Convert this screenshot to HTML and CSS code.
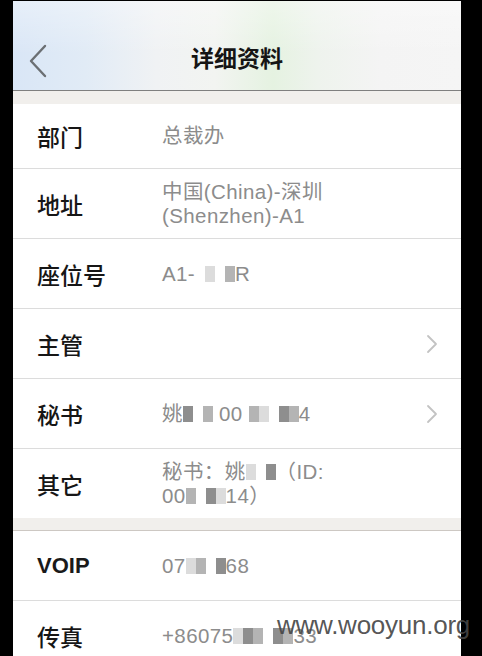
FILE: index.html
```html
<!DOCTYPE html>
<html lang="zh-CN">
<head>
<meta charset="utf-8">
<title>详细资料</title>
<link rel="stylesheet" href="styles.css">
</head>
<body>
<div class="screen">
  <header class="nav">
    <span class="back">
      <svg width="20" height="34" viewBox="0 0 20 34"><path d="M17 2 L3 17 L17 32" fill="none" stroke="#6b6f73" stroke-width="2.4" stroke-linecap="round" stroke-linejoin="round"/></svg>
    </span>
    <h1 class="title">详细资料</h1>
  </header>
  <div class="gap"></div>
  <ul class="group">
    <li class="row row--short"><span class="label">部门</span><span class="value">总裁办</span></li>
    <li class="row"><span class="label">地址</span><span class="value">中国(China)-深圳<br>(Shenzhen)-A1</span></li>
    <li class="row"><span class="label">座位号</span><span class="value">A1-<i class="px px-w"></i><i class="px px-c"></i><i class="px px-w"></i><i class="px px-b"></i>R</span></li>
    <li class="row"><span class="label">主管</span><span class="value"></span>
      <svg class="chev" width="12" height="20" viewBox="0 0 12 20"><path d="M2 2 L10 10 L2 18" fill="none" stroke="#c3c3c3" stroke-width="1.8" stroke-linecap="round" stroke-linejoin="round"/></svg></li>
    <li class="row"><span class="label">秘书</span><span class="value">姚<i class="px px-a"></i><i class="px px-w"></i><i class="px px-b"></i> 00 <i class="px px-b"></i><i class="px px-c"></i><i class="px px-w"></i><i class="px px-a"></i><i class="px px-b"></i>4</span>
      <svg class="chev" width="12" height="20" viewBox="0 0 12 20"><path d="M2 2 L10 10 L2 18" fill="none" stroke="#c3c3c3" stroke-width="1.8" stroke-linecap="round" stroke-linejoin="round"/></svg></li>
    <li class="row row--last"><span class="label">其它</span><span class="value">秘书：姚<i class="px px-c"></i><i class="px px-w"></i><i class="px px-a"></i>（ID:<br>00<i class="px px-b"></i><i class="px px-w"></i><i class="px px-a"></i><i class="px px-c"></i>14）</span></li>
  </ul>
  <div class="gap gap--lined"></div>
  <ul class="group">
    <li class="row"><span class="label label--latin">VOIP</span><span class="value">07<i class="px px-c"></i><i class="px px-b"></i><i class="px px-w"></i><i class="px px-a"></i>68</span></li>
    <li class="row"><span class="label">传真</span><span class="value">+86075<i class="px px-c"></i><i class="px px-a"></i><i class="px px-b"></i><i class="px px-w"></i><i class="px px-a"></i><i class="px px-b"></i>33</span></li>
  </ul>
</div>
<div class="watermark">www.wooyun.org</div>
</body>
</html>
```
FILE: styles.css
```css
html, body {
  margin: 0;
  padding: 0;
  background: #000;
  height: 656px;
  overflow: hidden;
}
body {
  position: relative;
  font-family: "Liberation Sans", "Noto Sans CJK SC", sans-serif;
}
.screen {
  margin: 1px 0 0 13px;
  width: 448px;
  height: 655px;
  background: #fff;
  overflow: hidden;
}
.nav {
  height: 89px;
  border-bottom: 1px solid #7f7f7f;
  background:
    linear-gradient(to bottom, rgba(255,255,255,0.35), rgba(255,255,255,0) 60%),
    linear-gradient(to right, #d9e6f6 0%, #e1ebf6 16%, #f0f2f4 32%, #f2f4f1 45%, #e5f2e1 58%, #eef3ed 68%, #f4f4f4 82%, #f5f5f5 100%);
  display: flex;
  align-items: center;
  justify-content: center;
  position: relative;
}
.back {
  position: absolute;
  left: 15px;
  top: 43px;
  display: flex;
}
.title {
  margin: 22px 0 0 0;
  font-family: "Noto Sans CJK SC", sans-serif;
  font-size: 23px;
  font-weight: 700;
  color: #151515;
}
.gap {
  height: 13px;
  background: #f1efec;
}
.gap--lined {
  height: 12px;
  border-bottom: 1px solid #cdc8c3;
}
.group {
  list-style: none;
  margin: 0;
  padding: 0;
}
.row {
  height: 69px;
  border-bottom: 1px solid #dcdcdc;
  display: flex;
  align-items: center;
  padding: 0 23px 0 24px;
}
.row--short {
  height: 64px;
}
.row--last {
  border-bottom: none;
}
.label {
  width: 125px;
  flex: none;
  font-family: "Noto Sans CJK SC", sans-serif;
  font-size: 23px;
  font-weight: 500;
  color: #161616;
}
.label--latin {
  font-family: "Liberation Sans", sans-serif;
  font-size: 22px;
  font-weight: 700;
  color: #1a1a1a;
}
.value {
  flex: 1;
  font-size: 20.5px;
  line-height: 24px;
  letter-spacing: 0.4px;
  color: #8c8c8c;
}
.chev {
  flex: none;
}
.px {
  display: inline-block;
  width: 10px;
  height: 16px;
  vertical-align: -1px;
}
.px-a { background: #8e8e8e; }
.px-b { background: #b4b4b4; }
.px-c { background: #dcdcdc; }
.px-w { background: transparent; }
.watermark {
  position: absolute;
  left: 277px;
  top: 612px;
  font-family: "Liberation Sans", sans-serif;
  font-size: 26px;
  line-height: 26px;
  letter-spacing: -0.25px;
  color: rgba(70, 70, 70, 0.92);
}
```
